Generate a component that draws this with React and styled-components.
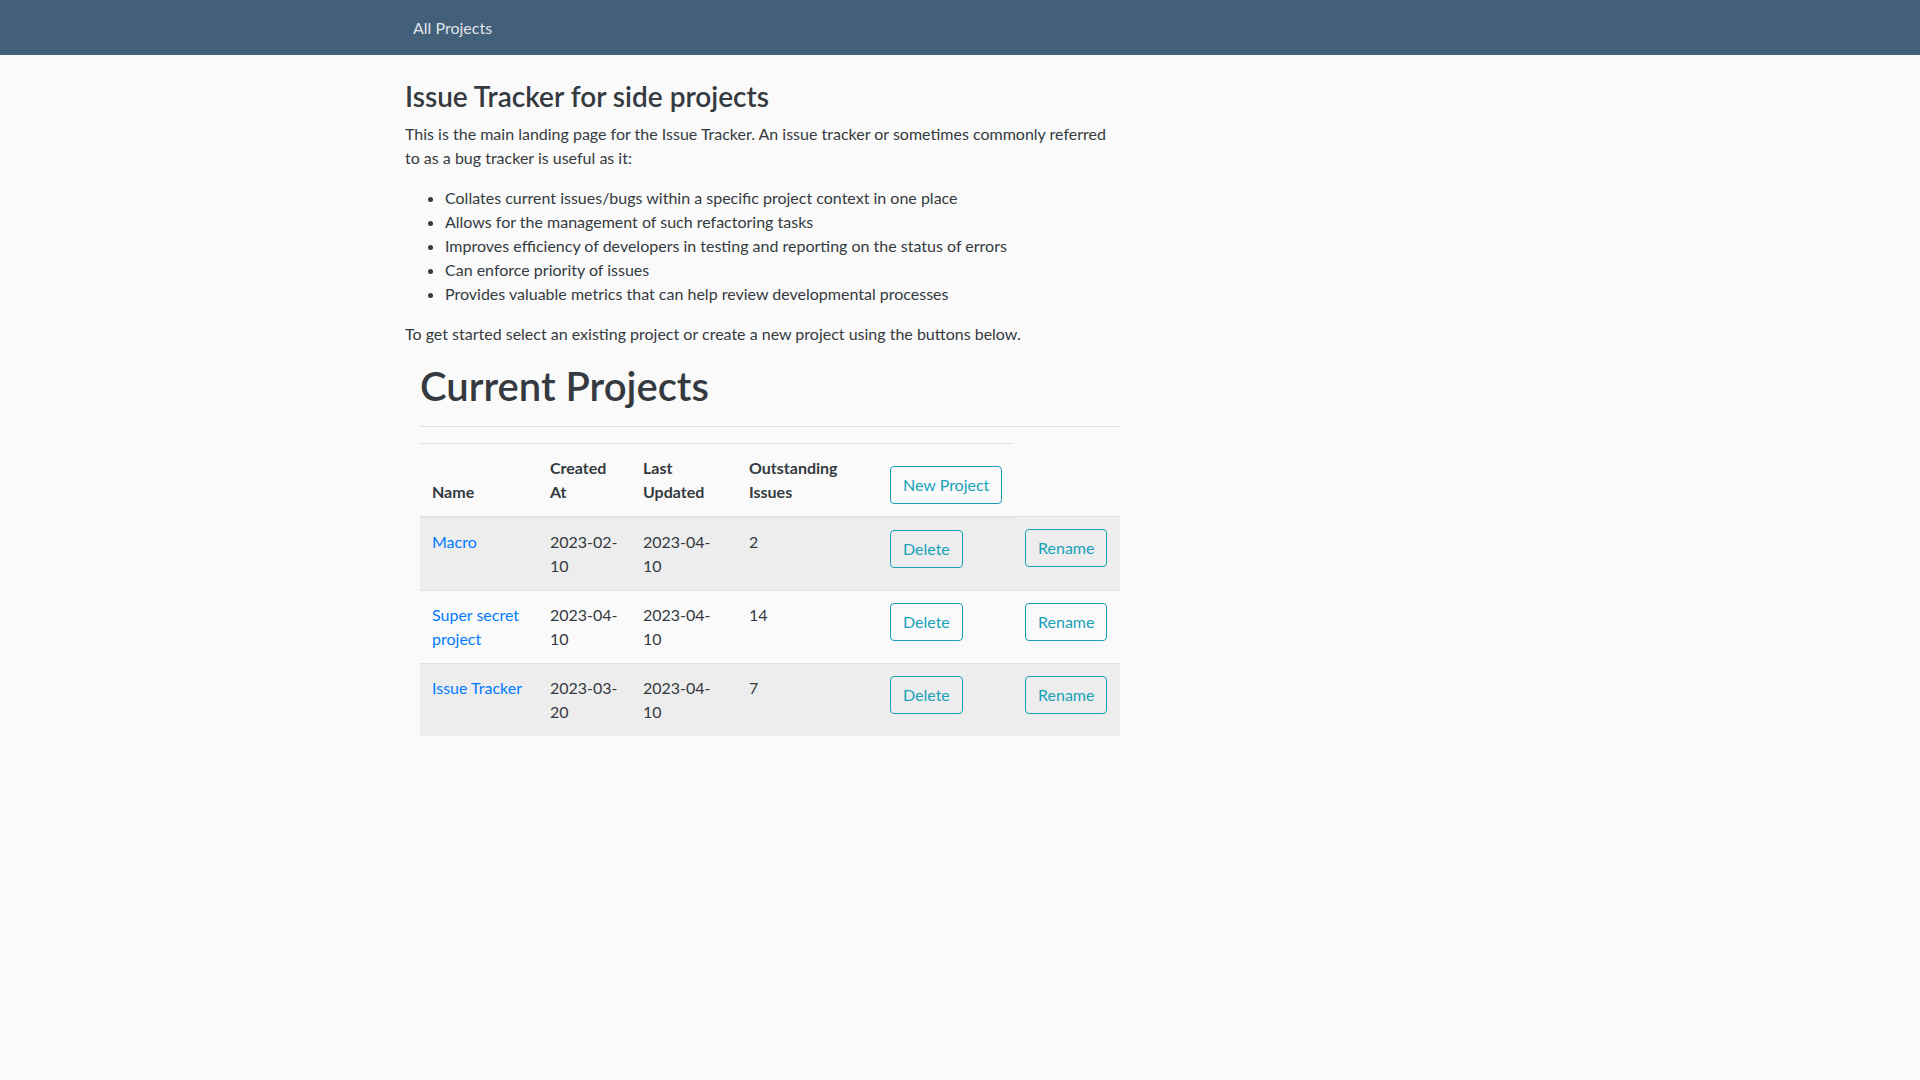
import React from 'react';
import styled, { createGlobalStyle } from 'styled-components';

const GlobalStyle = createGlobalStyle`
  body {
    margin: 0;
    background-color: #fafafa;
    color: #343a40;
    font-family: Lato, "Open Sans", sans-serif;
    font-size: 16px;
    line-height: 1.5;
  }
  * { box-sizing: border-box; }
`;

const NavBar = styled.nav`
  background-color: #426079;
  height: 55px;
  display: flex;
  align-items: center;
`;

const Container = styled.div`
  width: 1140px;
  margin: 0 auto;
  padding: 0 15px;
`;

const NavLink = styled.a`
  display: inline-block;
  padding: 8px;
  color: rgba(255, 255, 255, 0.85);
  text-decoration: none;
`;

const Main = styled.main`
  width: 730px;
  padding-top: 25px;
`;

const Title = styled.h3`
  font-size: 28px;
  font-weight: 600;
  line-height: 1.2;
  margin: 0 0 8px;
`;

const Text = styled.p`
  margin: 0 0 16px;
`;

const Intro = styled(Text)`
  padding-right: 14px;
`;

const List = styled.ul`
  margin: 0 0 16px;
  padding-left: 40px;
`;

const Section = styled.section`
  padding: 0 15px;
`;

const BigTitle = styled.h1`
  font-size: 40px;
  font-weight: 600;
  line-height: 1.2;
  margin: 0 0 8px;
`;

const Rule = styled.hr`
  margin: 16px 0;
  border: 0;
  border-top: 1px solid rgba(0, 0, 0, 0.1);
`;

const Table = styled.table`
  width: 100%;
  border-collapse: collapse;
  table-layout: fixed;
  color: #343a40;
`;

const Th = styled.th`
  text-align: left;
  vertical-align: bottom;
  padding: 12px;
  font-weight: 700;
  border-top: 1px solid #dee2e6;
  border-bottom: 2px solid #dee2e6;
`;

const Row = styled.tr`
  background-color: ${p => (p.$striped ? 'rgba(0, 0, 0, 0.05)' : 'transparent')};
`;

const Td = styled.td`
  vertical-align: top;
  padding: 12px;
  border-top: 1px solid #dee2e6;
`;

const ProjectLink = styled.a`
  color: #007bff;
  text-decoration: none;
`;

const Button = styled.button`
  font-family: inherit;
  font-size: 16px;
  line-height: 1.5;
  padding: 6px 12px;
  border: 1px solid #17a2b8;
  border-radius: 4px;
  background: transparent;
  color: #17a2b8;
  cursor: pointer;
  white-space: nowrap;
`;

const bullets = [
  'Collates current issues/bugs within a specific project context in one place',
  'Allows for the management of such refactoring tasks',
  'Improves efficiency of developers in testing and reporting on the status of errors',
  'Can enforce priority of issues',
  'Provides valuable metrics that can help review developmental processes',
];

const projects = [
  { name: 'Macro', created: '2023-02-10', updated: '2023-04-10', issues: 2 },
  { name: 'Super secret project', created: '2023-04-10', updated: '2023-04-10', issues: 14 },
  { name: 'Issue Tracker', created: '2023-03-20', updated: '2023-04-10', issues: 7 },
];

export default function App() {
  return (
    <>
      <GlobalStyle />
      <NavBar>
        <Container>
          <NavLink href="#">All Projects</NavLink>
        </Container>
      </NavBar>
      <Container>
        <Main>
          <Title>Issue Tracker for side projects</Title>
          <Intro>
            This is the main landing page for the Issue Tracker. An issue tracker or sometimes
            commonly referred to as a bug tracker is useful as it:
          </Intro>
          <List>
            {bullets.map(b => (
              <li key={b}>{b}</li>
            ))}
          </List>
          <Text>To get started select an existing project or create a new project using the buttons below.</Text>
          <Section>
            <BigTitle>Current Projects</BigTitle>
            <Rule />
            <Table>
              <colgroup>
                <col style={{ width: 118 }} />
                <col style={{ width: 93 }} />
                <col style={{ width: 106 }} />
                <col style={{ width: 141 }} />
                <col style={{ width: 135 }} />
                <col />
              </colgroup>
              <thead>
                <tr>
                  <Th>Name</Th>
                  <Th>Created At</Th>
                  <Th>Last Updated</Th>
                  <Th>Outstanding Issues</Th>
                  <Th>
                    <Button>New Project</Button>
                  </Th>
                </tr>
              </thead>
              <tbody>
                {projects.map((p, i) => (
                  <Row key={p.name} $striped={i % 2 === 0}>
                    <Td>
                      <ProjectLink href="#">{p.name}</ProjectLink>
                    </Td>
                    <Td>{p.created}</Td>
                    <Td>{p.updated}</Td>
                    <Td>{p.issues}</Td>
                    <Td>
                      <Button>Delete</Button>
                    </Td>
                    <Td>
                      <Button>Rename</Button>
                    </Td>
                  </Row>
                ))}
              </tbody>
            </Table>
          </Section>
        </Main>
      </Container>
    </>
  );
}
